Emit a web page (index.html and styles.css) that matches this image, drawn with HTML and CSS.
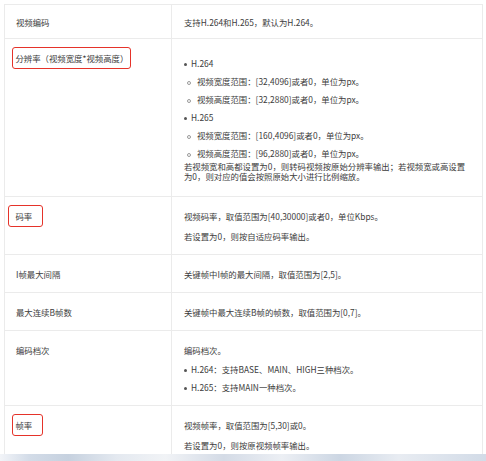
FILE: index.html
```html
<!DOCTYPE html>
<html lang="zh-CN">

<head>
    <meta charset="UTF-8">
    <meta name="viewport" content="width=device-width, initial-scale=1.0">
    <title>转码参数</title>
    <link rel="stylesheet" href="styles.css">
</head>

<body>
    <div class="page">
        <table class="params">
            <colgroup>
                <col class="col-name">
                <col>
            </colgroup>
            <tbody>
                <tr class="row-first">
                    <td class="name">视频编码</td>
                    <td class="desc">支持H.264和H.265，默认为H.264。</td>
                </tr>
                <tr>
                    <td class="name"><span class="mark">分辨率（视频宽度*视频高度）</span></td>
                    <td class="desc">
                        <ul class="list list-top">
                            <li>H.264
                                <ul class="sub">
                                    <li>视频宽度范围：[32,4096]或者0，单位为px。</li>
                                    <li>视频高度范围：[32,2880]或者0，单位为px。</li>
                                </ul>
                            </li>
                            <li>H.265
                                <ul class="sub">
                                    <li>视频宽度范围：[160,4096]或者0，单位为px。</li>
                                    <li>视频高度范围：[96,2880]或者0，单位为px。</li>
                                </ul>
                            </li>
                        </ul>
                        <p class="note">若视频宽和高都设置为0，则转码视频按原始分辨率输出；若视频宽或高设置为0，则对应的值会按照原始大小进行比例缩放。</p>
                    </td>
                </tr>
                <tr>
                    <td class="name"><span class="mark mark-loose">码率</span></td>
                    <td class="desc">
                        <p>视频码率，取值范围为[40,30000]或者0，单位Kbps。</p>
                        <p class="next">若设置为0，则按自适应码率输出。</p>
                    </td>
                </tr>
                <tr>
                    <td class="name">I帧最大间隔</td>
                    <td class="desc">关键帧中I帧的最大间隔，取值范围为[2,5]。</td>
                </tr>
                <tr>
                    <td class="name">最大连续B帧数</td>
                    <td class="desc">关键帧中最大连续B帧的帧数，取值范围为[0,7]。</td>
                </tr>
                <tr>
                    <td class="name">编码档次</td>
                    <td class="desc">
                        <p>编码档次。</p>
                        <ul class="list list-profile">
                            <li>H.264：支持BASE、MAIN、HIGH三种档次。</li>
                            <li>H.265：支持MAIN一种档次。</li>
                        </ul>
                    </td>
                </tr>
                <tr>
                    <td class="name"><span class="mark mark-right">帧率</span></td>
                    <td class="desc">
                        <p>视频帧率，取值范围为[5,30]或0。</p>
                        <p class="next">若设置为0，则按原视频帧率输出。</p>
                    </td>
                </tr>
            </tbody>
        </table>
    </div>
    <div class="backdrop"></div>
</body>

</html>
```

FILE: styles.css
```css
body {
    margin: 0;
    background: #fff;
    font-family: "Noto Sans CJK SC", "Noto Sans", sans-serif;
    font-size: 8.4px;
    color: #3c3c3c;
    overflow: hidden;
}

.page {
    padding: 4px 3px 0 4px;
}

.params {
    width: 479px;
    table-layout: fixed;
    border-collapse: separate;
    border-spacing: 0;
    border-top: 1px solid #ebebeb;
    border-left: 1px solid #ebebeb;
}

.col-name {
    width: 167px;
}

.params td {
    vertical-align: top;
    line-height: 18px;
    padding: 10px 12px 9px;
    border-right: 1px solid #ebebeb;
    border-bottom: 1px solid #ebebeb;
}

.params td.name {
    padding-left: 11px;
}

.row-first td {
    padding-top: 8px;
    padding-bottom: 7px;
}

.params p {
    margin: 0;
}

.params p.next {
    margin-top: 2px;
}

/* red annotation boxes */
.mark {
    display: inline-block;
    line-height: 18px;
    padding: 1px 2px 1px 3px;
    margin: -2.5px -3.5px -2.5px -4.5px;
    border: 1.5px solid #e5332a;
    border-radius: 3px;
}

.mark-loose {
    padding-left: 6.5px;
    padding-right: 10px;
    margin-left: -8px;
    margin-right: -11.5px;
}

.mark-right {
    padding-right: 10px;
    margin-right: -11.5px;
}

.list,
.sub {
    list-style: none;
    margin: 0;
    padding: 0;
}

.list-top {
    margin-top: 5px;
}

.list-profile {
    margin-top: 1px;
}

.list > li::before {
    content: "";
    display: inline-block;
    width: 3px;
    height: 3px;
    border-radius: 50%;
    background: #555;
    margin-right: 4px;
    vertical-align: middle;
}

.sub > li {
    padding-left: 3px;
}

.sub > li::before {
    content: "";
    display: inline-block;
    box-sizing: border-box;
    width: 4px;
    height: 4px;
    border: 1px solid #9a9a9a;
    border-radius: 50%;
    margin-right: 6px;
    vertical-align: middle;
}

.note {
    line-height: 10px;
    margin-top: -1px !important;
    margin-bottom: 6px !important;
}

.backdrop {
    position: fixed;
    left: 0;
    right: 0;
    bottom: 0;
    height: 7px;
    background: linear-gradient(90deg, #f2f4f8 0%, #d3dce8 6%, #c6d1df 14%, #e4e9f0 24%, #f1f3f6 34%, #d4dbe6 46%, #eceff4 58%, #ccd6e3 70%, #e8ecf2 82%, #d2dbe7 100%);
}
```
